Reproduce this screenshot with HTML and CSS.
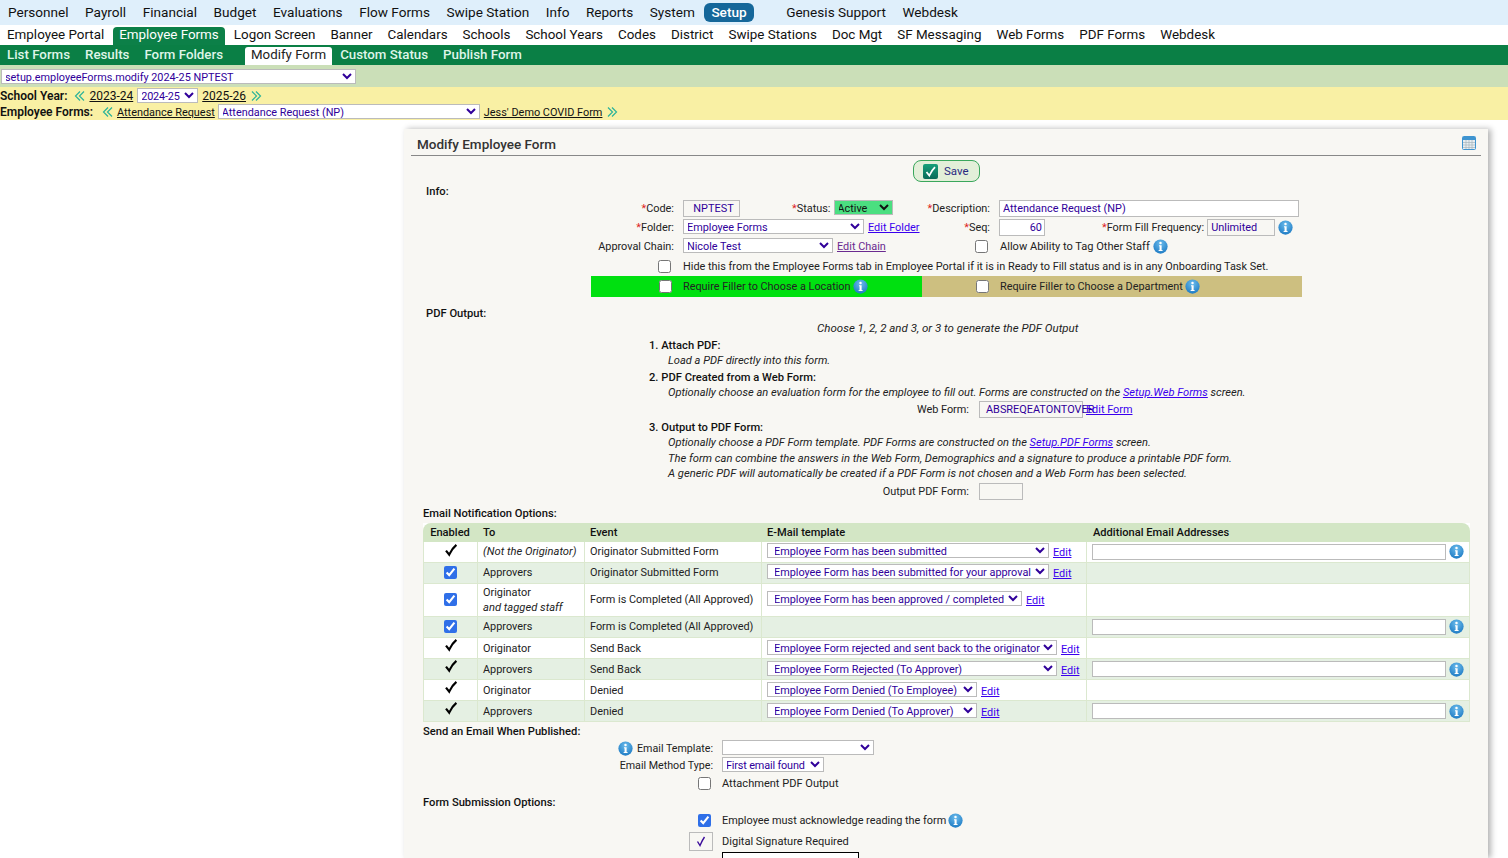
FILE: index.html
```html
<!DOCTYPE html>
<html lang="en">
<head>
<meta charset="utf-8">
<title>Modify Employee Form</title>
<link rel="stylesheet" href="styles.css">
</head>
<body>
<svg class="defs" width="0" height="0" aria-hidden="true">
  <defs>
    <radialGradient id="infoGrad" cx="50%" cy="30%" r="75%">
      <stop offset="0" stop-color="#6cbcec"/>
      <stop offset="1" stop-color="#1a78c2"/>
    </radialGradient>
    <linearGradient id="saveGrad" x1="0" y1="0" x2="0" y2="1">
      <stop offset="0" stop-color="#17a07a"/>
      <stop offset="1" stop-color="#0a6a58"/>
    </linearGradient>
    <symbol id="info" viewBox="0 0 16 16">
      <circle cx="8" cy="8" r="7.6" fill="url(#infoGrad)"/>
      <circle cx="8" cy="4.2" r="1.3" fill="#fff"/>
      <path d="M6.4 6.6H9.2V11.6H10.2V12.8H6V11.6H7V7.8H6.4Z" fill="#fff"/>
    </symbol>
    <symbol id="tick" viewBox="0 0 14 14">
      <path d="M2 7.6L5.2 11.6C7 7.6 9 4.6 12.4 1.8" fill="none" stroke="#000" stroke-width="2.2"/>
    </symbol>
    <symbol id="chev" viewBox="0 0 12 12">
      <path d="M7 1.5L2.5 6L7 10.5M11 1.5L6.5 6L11 10.5" fill="none" stroke="#2bb39a" stroke-width="1.2"/>
    </symbol>
    <symbol id="chevr" viewBox="0 0 12 12">
      <path d="M1 1.5L5.5 6L1 10.5M5 1.5L9.5 6L5 10.5" fill="none" stroke="#2bb39a" stroke-width="1.2"/>
    </symbol>
  </defs>
</svg>

<nav class="nav nav-top">
  <a>Personnel</a><a>Payroll</a><a>Financial</a><a>Budget</a><a>Evaluations</a><a>Flow Forms</a><a>Swipe Station</a><a>Info</a><a>Reports</a><a>System</a><a class="active">Setup</a><a class="gap">Genesis Support</a><a>Webdesk</a>
</nav>
<nav class="nav nav-second">
  <a>Employee Portal</a><a class="active">Employee Forms</a><a>Logon Screen</a><a>Banner</a><a>Calendars</a><a>Schools</a><a>School Years</a><a>Codes</a><a>District</a><a>Swipe Stations</a><a>Doc Mgt</a><a>SF Messaging</a><a>Web Forms</a><a>PDF Forms</a><a>Webdesk</a>
</nav>
<nav class="nav nav-third">
  <a>List Forms</a><a>Results</a><a>Form Folders</a><a class="active">Modify Form</a><a>Custom Status</a><a>Publish Form</a>
</nav>
<div class="bar-select">
  <select class="sel w-355"><option>setup.employeeForms.modify 2024-25 NPTEST</option></select>
</div>
<div class="bar-yellow">
  <div class="yrow"><b>School Year:</b><svg class="dbl first"><use href="#chev"/></svg><a>2023-24</a><select class="sel w-60"><option>2024-25</option></select><a>2025-26</a><svg class="dbl"><use href="#chevr"/></svg></div>
  <div class="yrow yrow-small"><b>Employee Forms:</b><svg class="dbl first"><use href="#chev"/></svg><a>Attendance Request</a><select class="sel w-262"><option>Attendance Request (NP)</option></select><a>Jess' Demo COVID Form</a><svg class="dbl"><use href="#chevr"/></svg></div>
</div>

<main class="panel">
  <header class="panel-head">
    <h1>Modify Employee Form</h1>
    <svg class="cal" viewBox="0 0 14 14"><rect x=".5" y=".5" width="13" height="13" rx="1" fill="#e8eef2" stroke="#3f94d0"/><rect x="1" y="1" width="12" height="3" fill="#3f94d0"/><path d="M1 6.5H13M1 9H13M1 11.5H13M4 4V13M7 4V13M10 4V13" stroke="#a8b4bc" stroke-width=".7"/></svg>
  </header>
  <div class="save-wrap">
    <button class="save" type="button"><svg viewBox="0 0 15 15"><rect width="15" height="15" rx="2" fill="url(#saveGrad)"/><path d="M3.5 8L6.3 11.5C7.6 8.6 9.2 6 12 3.2" fill="none" stroke="#fff" stroke-width="1.8"/></svg>Save</button>
  </div>
  <h2 class="sec sec-info">Info:</h2>

  <div class="f-row">
    <label class="lab"><i>*</i>Code:</label>
    <div class="mid"><input class="inp ro w-57 center code-in" value="NPTEST" readonly><label class="status-lab"><i>*</i>Status:</label><select class="sel green"><option>Active</option></select><label class="end-lab"><i>*</i>Description:</label></div>
    <div><input class="inp w-300" value="Attendance Request (NP)"></div>
  </div>
  <div class="f-row">
    <label class="lab"><i>*</i>Folder:</label>
    <div class="mid"><select class="sel w-181"><option>Employee Forms</option></select><a class="lnk">Edit Folder</a><label class="end-lab"><i>*</i>Seq:</label></div>
    <div class="rest"><input class="inp w-46 right" value="60"><label class="freq-lab"><i>*</i>Form Fill Frequency:</label><input class="inp ro w-68 freq-in" value="Unlimited" readonly><svg class="ic"><use href="#info"/></svg></div>
  </div>
  <div class="f-row">
    <label class="lab">Approval Chain:</label>
    <div class="mid"><select class="sel w-150"><option>Nicole Test</option></select><a class="lnk visited">Edit Chain</a><input class="chk chk-end" type="checkbox"></div>
    <div class="rest allow">Allow Ability to Tag Other Staff<svg class="ic"><use href="#info"/></svg></div>
  </div>
  <div class="f-row f-tall">
    <div class="lab"><input class="chk" type="checkbox"></div>
    <div class="span">Hide this from the Employee Forms tab in Employee Portal if it is in Ready to Fill status and is in any Onboarding Task Set.</div>
  </div>
  <div class="req">
    <div class="req-a"><input class="chk" type="checkbox"><span>Require Filler to Choose a Location</span><svg class="ic ic-tight"><use href="#info"/></svg></div>
    <div class="req-b"><input class="chk" type="checkbox"><span>Require Filler to Choose a Department</span><svg class="ic ic-tight"><use href="#info"/></svg></div>
  </div>

  <h2 class="sec sec-pdf">PDF Output:</h2>
  <p class="choose">Choose 1, 2, 2 and 3, or 3 to generate the PDF Output</p>
  <section class="pdf">
    <h3>1. Attach PDF:</h3>
    <p>Load a PDF directly into this form.</p>
    <h3 class="h2nd">2. PDF Created from a Web Form:</h3>
    <p>Optionally choose an evaluation form for the employee to fill out. Forms are constructed on the <a class="lnk">Setup.Web Forms</a> screen.</p>
    <div class="pdf-f pdf-web"><label>Web Form:</label><span class="over"><span class="inp ro w-104 clip">ABSREQEATONTOVER</span><a class="lnk edit-over">Edit Form</a></span></div>
    <h3 class="h3rd">3. Output to PDF Form:</h3>
    <p>Optionally choose a PDF Form template. PDF Forms are constructed on the <a class="lnk">Setup.PDF Forms</a> screen.</p>
    <p class="wide">The form can combine the answers in the Web Form, Demographics and a signature to produce a printable PDF form.</p>
    <p class="wide">A generic PDF will automatically be created if a PDF Form is not chosen and a Web Form has been selected.</p>
    <div class="pdf-f pdf-out"><label>Output PDF Form:</label><span class="inp ro w-44"></span></div>
  </section>

  <h2 class="sec sec-tight sec-email">Email Notification Options:</h2>
  <table class="grid">
    <colgroup><col class="c1"><col class="c2"><col class="c3"><col class="c4"><col class="c5"></colgroup>
    <thead><tr><th class="ctr-h">Enabled</th><th>To</th><th>Event</th><th>E-Mail template</th><th>Additional Email Addresses</th></tr></thead>
    <tbody>
      <tr><td class="ctr"><svg class="tick"><use href="#tick"/></svg></td><td><em>(Not the Originator)</em></td><td>Originator Submitted Form</td><td><select class="sel w-282"><option>Employee Form has been submitted</option></select><a class="lnk">Edit</a></td><td><div class="addr"><input class="inp addr-in"><svg class="ic"><use href="#info"/></svg></div></td></tr>
      <tr class="alt"><td class="ctr"><input class="chk" type="checkbox" checked></td><td>Approvers</td><td>Originator Submitted Form</td><td><select class="sel w-282"><option>Employee Form has been submitted for your approval</option></select><a class="lnk">Edit</a></td><td></td></tr>
      <tr class="tall"><td class="ctr"><input class="chk" type="checkbox" checked></td><td>Originator<br><em>and tagged staff</em></td><td>Form is Completed (All Approved)</td><td><select class="sel w-255"><option>Employee Form has been approved / completed</option></select><a class="lnk">Edit</a></td><td></td></tr>
      <tr class="alt"><td class="ctr"><input class="chk" type="checkbox" checked></td><td>Approvers</td><td>Form is Completed (All Approved)</td><td></td><td><div class="addr"><input class="inp addr-in"><svg class="ic"><use href="#info"/></svg></div></td></tr>
      <tr class="low"><td class="ctr"><svg class="tick"><use href="#tick"/></svg></td><td>Originator</td><td>Send Back</td><td><select class="sel w-290"><option>Employee Form rejected and sent back to the originator</option></select><a class="lnk">Edit</a></td><td></td></tr>
      <tr class="alt low"><td class="ctr"><svg class="tick"><use href="#tick"/></svg></td><td>Approvers</td><td>Send Back</td><td><select class="sel w-290"><option>Employee Form Rejected (To Approver)</option></select><a class="lnk">Edit</a></td><td><div class="addr"><input class="inp addr-in"><svg class="ic"><use href="#info"/></svg></div></td></tr>
      <tr class="low"><td class="ctr"><svg class="tick"><use href="#tick"/></svg></td><td>Originator</td><td>Denied</td><td><select class="sel w-210"><option>Employee Form Denied (To Employee)</option></select><a class="lnk">Edit</a></td><td></td></tr>
      <tr class="alt low"><td class="ctr"><svg class="tick"><use href="#tick"/></svg></td><td>Approvers</td><td>Denied</td><td><select class="sel w-210"><option>Employee Form Denied (To Approver)</option></select><a class="lnk">Edit</a></td><td><div class="addr"><input class="inp addr-in"><svg class="ic"><use href="#info"/></svg></div></td></tr>
    </tbody>
  </table>

  <h2 class="sec sec-tight sec-pub">Send an Email When Published:</h2>
  <div class="o-row o-first"><label class="o-lab"><svg class="ic ic-l"><use href="#info"/></svg>Email Template:</label><select class="sel w-152"><option></option></select></div>
  <div class="o-row"><label class="o-lab">Email Method Type:</label><select class="sel w-102"><option>First email found</option></select></div>
  <div class="o-row o-chk"><div class="o-lab"><input class="chk" type="checkbox"></div><span>Attachment PDF Output</span></div>
  <h2 class="sec sec-tight sec-sub">Form Submission Options:</h2>
  <div class="o-row o-ack"><div class="o-lab"><input class="chk" type="checkbox" checked></div><span>Employee must acknowledge reading the form</span><svg class="ic ic-tight"><use href="#info"/></svg></div>
  <div class="o-row o-sig"><div class="o-lab"><span class="sig-box"><svg viewBox="0 0 14 14"><path d="M3.5 7.5L6 11.5C7.5 8 8.8 5.4 10.5 3" fill="none" stroke="#3a0a9a" stroke-width="1.4"/></svg></span></div><span>Digital Signature Required</span></div>
  <div class="sig-area"></div>
</main>
</body>
</html>
```
FILE: styles.css
```css
html { overflow: hidden; height: 100%; }
body { margin: 0; background: #fff; font: 10.9px/15px Roboto, "Liberation Sans", sans-serif; color: #222; }
.defs { position: absolute; }

.nav { display: flex; font-size: 13.4px; line-height: 20px; white-space: nowrap; }
.nav a { display: block; }
.nav-top { height: 25px; background: #dfeffb; padding: 2px 0 0 8px; box-sizing: border-box; gap: 16.5px; color: #111; font-size: 13.6px; }
.nav-top .active { background: #15679a; color: #fff; border-radius: 6px; padding: 0 7px; margin: 1px -3px 0 -7px; height: 19px; line-height: 18px; font-weight: 500; }
.nav-top .gap { margin-left: 19px; }
.nav-second { height: 20px; padding-left: 7px; gap: 15px; color: #111; }
.nav-second .active { background: #0c8048; color: #fff; border-radius: 4px 4px 0 0; padding: 0 6px; margin: 2px -6px 0; height: 18px; line-height: 16px; }
.nav-third { height: 20px; background: #0a7f45; color: #dff5e8; padding-left: 7px; gap: 15px; font-weight: 500; font-size: 13.3px; }
.nav-third .active { background: #fff; color: #222; font-weight: 400; padding: 0 6px; margin: 2px -7px 0 7px; height: 18px; line-height: 16px; border-radius: 3px 3px 0 0; }

.bar-select { height: 22px; background: #cbdfb8; box-sizing: border-box; padding-top: 4px; }
.bar-select .sel { display: block; margin-bottom: 0; }
.bar-yellow { height: 33px; background: #f9f0a4; font-size: 12px; }
.yrow { display: flex; align-items: center; height: 16px; color: #111; }
.yrow:first-child { padding-top: 1px; }
.yrow b { font-weight: 600; }
.yrow a { text-decoration: underline; }
.yrow .sel { margin: 0 4px 2px; }
.yrow-small a { font-size: 10.9px; }
.yrow-small .sel { margin-left: 3px; }
.dbl { width: 12px; height: 12px; margin-left: 5px; }
.dbl.first { margin: 0 4px 0 6px; }
.yrow-small .dbl.first { margin: 0 4px 0 8px; }

.sel { height: 15px; box-sizing: border-box; border: 1px solid #bbb; border-radius: 0; background-color: #fff; color: #30009a; font: 10.85px Roboto, sans-serif; padding: 0; margin-bottom: 2px; text-indent: -1px; }
.w-355 { width: 355px; margin-left: 1px; }
.w-60 { width: 61px; letter-spacing: -.15px; }
.w-262 { width: 262px; }
.w-181 { width: 181px; }
.w-150 { width: 150px; }
.w-282 { width: 282px; }
.w-255 { width: 255px; }
.w-290 { width: 290px; }
.w-210 { width: 210px; }
.w-152 { width: 152px; }
.w-102 { width: 102px; letter-spacing: -.15px; }
.green { background-color: #4bdf80; width: 59px; color: #111; text-indent: -2px; }

.panel { position: relative; width: 1084px; margin: 9px 0 0 404px; height: 729px; background: #f8f7f3; box-shadow: 3px 0 6px rgba(0,0,0,.3); box-sizing: border-box; overflow: hidden; }
.panel-head { display: flex; justify-content: space-between; align-items: center; margin: 0 7px; height: 27px; box-sizing: border-box; padding: 4px 5px 0 6px; border-bottom: 1px solid #888; }
.panel-head h1 { margin: 0; font-size: 13.5px; font-weight: 500; color: #333; }
.cal { width: 14px; height: 14px; margin-top: -3px; }

.save-wrap { display: flex; justify-content: center; padding-top: 4px; margin-left: 1px; }
.save { display: flex; align-items: center; gap: 6px; width: 67px; height: 22px; box-sizing: border-box; padding: 0 0 0 9px; border: 1px solid #3aa75c; border-radius: 8px; background: #e3efd9; color: #2a2a80; font: 11.5px Roboto, sans-serif; }
.save svg { width: 15px; height: 15px; }

.sec { margin: 0; font-size: 11.2px; font-weight: 500; line-height: 15px; color: #111; padding-left: 22px; }
.sec-info { margin-top: 2px; }
.sec-pdf { margin-top: 9px; }
.sec-tight { padding-left: 19px; }
.sec-email { margin-top: 5px; }
.sec-pub { margin-top: 2px; }
.sec-sub { margin-top: 2px; }

.f-row { display: grid; grid-template-columns: 270px 325px 1fr; align-items: center; height: 19px; }
.lab { text-align: right; display: flex; justify-content: flex-end; }
.lab .chk { margin-right: 3px; }
.f-row i, .mid i { color: #d22; font-style: normal; }
.mid { display: flex; align-items: center; padding-left: 9px; }
.status-lab { margin-left: 52px; margin-right: 4px; }
.end-lab { margin-left: auto; margin-right: 9px; }
.rest { display: flex; align-items: center; }
.allow { padding-left: 1px; font-size: 11.05px; }
.span { grid-column: 2 / 4; padding-left: 9px; }
.f-tall { height: 20px; }
.freq-lab { margin-left: 57px; margin-right: 3px; }
.freq-in { width: 68px; padding-left: 6px; }
.inp { display: inline-block; height: 17px; box-sizing: border-box; border: 1px solid #bbb; border-radius: 0; padding: 0 3px; background: #fff; color: #30009a; font: 10.9px/15px Roboto, sans-serif; }
.ro { background: #f8f7f3; }
.center { text-align: center; }
.code-in { padding: 0 0 0 4px; }
.right { text-align: right; padding-right: 2px; }
.w-57 { width: 57px; }
.w-300 { width: 300px; }
.w-46 { width: 46px; }
.w-68 { width: 68px; }
.w-104 { width: 104px; }
.w-44 { width: 44px; }
.chk { width: 13px; height: 13px; margin: 0; accent-color: #2f6fe8; }
.chk-end { margin-left: auto; margin-right: 11px; }
.ic { width: 15px; height: 15px; margin-left: 3px; flex: none; }
.ic-tight { margin-left: 2px; }
.lnk { color: #3a00ee; text-decoration: underline; margin-left: 4px; white-space: nowrap; }
.pdf .lnk { margin-left: 0; }
.visited { color: #6a2a90; }

.req { display: flex; height: 21px; margin-left: 187px; width: 711px; }
.req-a { width: 331px; background: #00e010; display: flex; align-items: center; padding-left: 68px; box-sizing: border-box; }
.req-b { flex: 1; background: #cdbf80; display: flex; align-items: center; padding-left: 54px; }
.req .chk { margin-right: 11px; }
.req span { color: #222; font-size: 10.85px; }

.choose { margin: 0; padding-left: 413px; font-style: italic; line-height: 15px; font-size: 11.5px; }
.pdf { margin: 2px 0 0 245px; }
.pdf h3 { margin: 0; font-size: 11.2px; font-weight: 500; line-height: 15px; color: #111; }
.pdf p { margin: 0; padding-left: 19px; font-style: italic; line-height: 15.5px; font-size: 11.1px; }
.pdf p.wide { font-size: 11.2px; }
.h2nd { margin-top: 1px !important; }
.h3rd { margin-top: 2px !important; }
.pdf-f { display: flex; align-items: center; height: 18px; }
.pdf-f label { width: 320px; text-align: right; margin-right: 10px; }
.pdf-out { margin-top: 1px; }
.over { position: relative; display: block; }
.clip { white-space: nowrap; padding-left: 6px; line-height: 15px; }
.edit-over { position: absolute; left: 107px; top: 1px; }

.grid { table-layout: fixed; width: 1047px; margin-left: 19px; margin-top: 2px; border-collapse: separate; border-spacing: 0; background: #fff; }
.c1 { width: 54px; } .c2 { width: 107px; } .c3 { width: 177px; } .c4 { width: 325px; }
.grid th { height: 19px; padding: 0 0 0 6px; text-align: left; font-size: 11.1px; font-weight: 500; background: #d3e6c5; color: #111; }
.grid th.ctr-h { padding: 0; text-align: center; }
.grid th:first-child { border-top-left-radius: 8px; }
.grid th:last-child { border-top-right-radius: 8px; padding-left: 7px; }
.grid td { height: 20px; padding: 0 0 0 5px; border-left: 1px solid #dbe8cf; border-bottom: 1px solid #dbe8cf; white-space: nowrap; box-sizing: content-box; }
.grid td:last-child { border-right: 1px solid #dbe8cf; }
.grid em { font-size: 11.2px; }
.grid .sel { padding-left: 3px; margin-bottom: 0; vertical-align: 1px; }
.grid .alt td { background: #e5f0e3; }
.grid .tall td { height: 32px; }
.grid .low td { padding-top: 1px; height: 19px; }
.grid td.ctr { padding: 0; text-align: center; }
.grid .low td.ctr { padding-top: 1px; }
.grid td.ctr .chk { vertical-align: middle; margin-top: -2px; }
.tick { width: 14px; height: 14px; vertical-align: middle; margin-top: -5px; }
.low .tick { margin-top: -7px; }
.addr { display: flex; align-items: center; }
.addr-in { width: 354px; height: 16px; }
.addr .ic { margin-left: 3px; }

.o-row { display: flex; align-items: center; height: 17px; }
.o-lab { width: 309px; margin-right: 9px; display: flex; justify-content: flex-end; align-items: center; font-size: 10.7px; }
.ic-l { margin: 0 4px 0 0; }
.o-first { margin-top: 1px; }
.o-chk { height: 19px; }
.o-chk .chk, .o-ack .chk { margin-right: 2px; }
.o-chk > span, .o-sig > span { font-size: 11.05px; }
.o-ack { margin-top: 1px; height: 20px; }
.o-sig { height: 21px; }
.sig-box { width: 24px; height: 19px; border: 1px solid #bbb; box-sizing: border-box; display: flex; align-items: center; justify-content: center; background: #f8f7f3; }
.sig-box svg { width: 14px; height: 14px; }
.sig-area { margin: 0 0 0 318px; width: 137px; height: 40px; box-sizing: border-box; border: 1px solid #000; background: #fff; }
```
